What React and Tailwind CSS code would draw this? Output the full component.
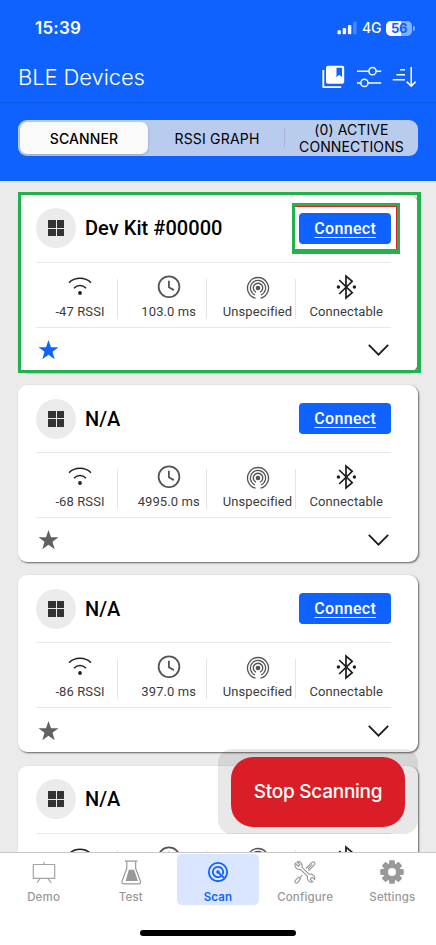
import React from "react";

const devices = [
  { name: "Dev Kit #00000", rssi: "-47 RSSI", interval: "103.0 ms", kind: "Unspecified", mode: "Connectable", action: "Connect", favorite: true },
  { name: "N/A", rssi: "-68 RSSI", interval: "4995.0 ms", kind: "Unspecified", mode: "Connectable", action: "Connect" },
  { name: "N/A", rssi: "-86 RSSI", interval: "397.0 ms", kind: "Unspecified", mode: "Connectable", action: "Connect" },
  { name: "N/A" },
];

function StatusBar() {
  return (
    <div className="flex h-[56px] items-center justify-between pl-[35px] pr-[21px] text-white">
      <span className="text-[17px] font-semibold leading-none tracking-[0.2px]">15:39</span>
      <div className="flex items-center">
        <svg width="20" height="14" viewBox="0 0 20 14" fill="white">
          <rect x="0.5" y="9.2" width="3.4" height="4" rx="0.9" />
          <rect x="5.7" y="7" width="3.4" height="6.2" rx="0.9" />
          <rect x="10.9" y="4" width="3.4" height="9.2" rx="0.9" />
          <rect x="16.1" y="0.8" width="3.4" height="12.4" rx="0.9" opacity="0.25" />
        </svg>
        <span className="ml-[5px] w-[21px] text-[14px] font-medium leading-none tracking-[-0.2px]">4G</span>
        <div className="ml-[3px] flex h-[15px] w-[26px] items-center justify-center rounded-[5px] bg-linear-to-r from-white from-56% to-[#87b1ff] to-56% text-[13px] font-bold leading-none tracking-[-0.3px] text-[#0f62fe]">
          56
        </div>
        <div className="ml-px h-[5px] w-[2px] rounded-r-full bg-[#87b1ff]" />
      </div>
    </div>
  );
}

function Header() {
  return (
    <div className="flex h-[47px] items-center justify-between border-b border-[#0c57e3] pb-[5px] pl-[18px] pr-[18px]">
      <h1 className="text-[22px] font-[350] leading-none tracking-[-0.1px] text-white">BLE Devices</h1>
      <div className="flex pt-[1px]">
        <svg width="100" height="26" viewBox="0 0 100 26" fill="none" stroke="white" strokeWidth="1.5">
          <path d="M5.3 6v17.1h17.9" strokeWidth="1.9" strokeLinejoin="round" />
          <path d="M10 1.8h14.2a2 2 0 0 1 2 2v14a2 2 0 0 1-2 2H10a2 2 0 0 1-2-2v-14a2 2 0 0 1 2-2Zm8.5 2v9.5l2.8-2.6 2.7 2.6V3.8Z" fill="white" fillRule="evenodd" stroke="none" />
          <path d="M39 7.2h11.7M58.3 7.2h4.9M39 18.9h3.6M50.2 18.9h13" />
          <circle cx="54.5" cy="7.2" r="3.6" />
          <circle cx="46.4" cy="18.9" r="3.6" />
          <path d="M82 5.8h5M78.5 10.8h8.5M74.7 15.8h12.3M93.2 3v18.7M88.7 17.6l4.5 4.5 4.5-4.5" />
        </svg>
      </div>
    </div>
  );
}

function SegmentedControl() {
  return (
    <div className="mx-[18px] mt-[17px] flex h-[36px] items-center rounded-[9px] bg-[#b9ccee] p-[2px] text-[14px] leading-[17px] text-black">
      <div className="flex h-[32px] w-[128px] items-center justify-center rounded-[7px] bg-[#fafafa] font-medium tracking-[0.1px] shadow-[0_1px_3px_rgba(0,0,0,0.2)]">SCANNER</div>
      <div className="flex h-[20px] w-[137px] items-center justify-center border-r border-[#a4b5d7] pl-[2px] tracking-[0.2px]">RSSI GRAPH</div>
      <div className="flex-1 pl-[2px] text-center tracking-[0.1px]">(0) ACTIVE<br />CONNECTIONS</div>
    </div>
  );
}

function WifiIcon() {
  return (
    <svg width="26" height="26" viewBox="0 0 26 26" fill="none" stroke="#222" strokeWidth="1.5">
      <path d="M2 8.7C8 2.9 18 2.9 24 8.7M7 14.2c3.5-3.5 8.5-3.5 12 0" />
      <circle cx="13" cy="19" r="1.9" fill="#222" stroke="none" />
    </svg>
  );
}

function ClockIcon() {
  return (
    <svg width="26" height="26" viewBox="0 0 26 26" fill="none" stroke="#555" strokeWidth="1.8">
      <circle cx="13" cy="12.7" r="10.4" />
      <path d="M12.9 6.8v6.4l5 2.9" />
    </svg>
  );
}

function BeaconIcon() {
  return (
    <svg width="26" height="26" viewBox="0 0 26 26" fill="none" stroke="#555" strokeWidth="1.3">
      <circle cx="13" cy="14" r="2.3" fill="#555" stroke="none" />
      <path d="M11 18.2a4.7 4.7 0 1 1 4 0M10 21a7.6 7.6 0 1 1 6 0M10.5 24.2a10.5 10.5 0 1 1 5 0" />
    </svg>
  );
}

function BluetoothIcon() {
  return (
    <svg width="26" height="26" viewBox="0 0 26 26" fill="none" stroke="#1c1c1c" strokeWidth="1.7">
      <path d="M6.2 6 19.2 18.6l-6.2 5.4V2l6.2 5.4L6.2 20" />
      <circle cx="5.4" cy="13" r="1.7" fill="#1c1c1c" stroke="none" />
      <circle cx="21.4" cy="13" r="1.7" fill="#1c1c1c" stroke="none" />
    </svg>
  );
}

function Stat({ icon, label, last }) {
  return (
    <div className="w-[89px]">
      <div className={`flex h-[40px] w-[82px] flex-col items-center border-r pl-[7px] ${last ? "border-transparent" : "border-[#e4e4e4]"}`}>
        <div className="-mt-[5px] h-[26px]">{icon}</div>
        {label && <span className="mt-[4px] whitespace-nowrap text-[13px] leading-[16px] tracking-[0.1px] text-[#3c3c3c]">{label}</span>}
      </div>
    </div>
  );
}

function DeviceCard({ device }) {
  return (
    <div className="relative h-[177px] shrink-0 rounded-[9px] bg-white px-[18px] pt-[13.5px] font-[Roboto,sans-serif] shadow-[1px_1px_2px_rgba(0,0,0,0.6)]">
      <div className="flex h-[40px] items-center">
        <div className="flex size-[40px] items-center justify-center rounded-full bg-[#ebebeb]">
          <div className="grid grid-cols-2 gap-px">
            <i className="size-[7.5px] bg-[#333]" />
            <i className="size-[7.5px] bg-[#333]" />
            <i className="size-[7.5px] bg-[#333]" />
            <i className="size-[7.5px] bg-[#333]" />
          </div>
        </div>
        <span className="ml-[9px] text-[20px] font-medium leading-none tracking-[0.05px] text-black">{device.name}</span>
        {device.action && (
          <button className="ml-auto mr-[9px] h-[31px] w-[91.6px] rounded-[4px] bg-[#0f62fe] pt-[1px] text-[16px] font-medium tracking-[0.3px] text-white underline decoration-1 underline-offset-3">
            {device.action}
          </button>
        )}
      </div>
      <div className="mr-[9px] mt-[13.5px] flex h-[66px] border-y border-[#e8e8e8] pt-[16px]">
        <Stat icon={<WifiIcon />} label={device.rssi} />
        <Stat icon={<ClockIcon />} label={device.interval} />
        <Stat icon={<BeaconIcon />} label={device.kind} />
        <Stat icon={<BluetoothIcon />} label={device.mode} last />
      </div>
      <div className="mr-[11.5px] flex h-[44.5px] items-center justify-between pl-[2px]">
        <svg width="21" height="20" viewBox="0 0 21 20" fill={device.favorite ? "#0f62fe" : "#616161"}>
          <path d="m10.5 0 2.5 7.2h7.5l-6 4.6 2.2 7.4-6.2-4.4-6.2 4.4 2.2-7.4-6-4.6H8Z" />
        </svg>
        <svg width="21" height="12" viewBox="0 0 21 12" fill="none" stroke="#1c1c1c" strokeWidth="1.8">
          <path d="m0.8 0.8 9.7 9.8 9.7-9.8" />
        </svg>
      </div>
      {device.favorite && (
        <>
          <div className="absolute -left-[0.5px] -top-[3px] h-[181px] w-[403px] border-3 border-r-4 border-[#22b14c]" />
          <div className="absolute left-[274px] top-[8.5px] h-[51px] w-[108px] border-3 border-b-5 border-[#22b14c]">
            <div className="h-full border-r border-t border-[#e0202c]" />
          </div>
        </>
      )}
    </div>
  );
}

function DemoIcon() {
  return (
    <svg width="28" height="28" viewBox="0 0 28 28" fill="none" stroke="#a3a3a3" strokeWidth="1.3">
      <path d="M2 5h24v15.5H2ZM14 2v3M9.5 20.8 6.2 25.5M18.5 20.8l3.7 4.7" />
    </svg>
  );
}

function FlaskIcon() {
  return (
    <svg width="28" height="28" viewBox="0 0 28 28" fill="none" stroke="#999" strokeWidth="1.3">
      <path d="M7.2 1.3h14M9.3 1.3v8L4 23.5q-1 3.2 2 3.2h16.5q3 0 2-3.2L19.2 9.3v-8" />
      <path d="M11.5 11h6l4.2 12.5H8Z" fill="#999" stroke="none" />
    </svg>
  );
}

function ScanIcon() {
  return (
    <svg width="28" height="28" viewBox="0 0 28 28" fill="none" stroke="#0f62fe" strokeWidth="2">
      <circle cx="14" cy="13.5" r="10.3" />
      <path d="M17.3 18.2a5.8 5.8 0 1 1 1.8-2M14 13.5l7.5 7" />
      <circle cx="14" cy="13.5" r="2" fill="#0f62fe" stroke="none" />
    </svg>
  );
}

function ToolsIcon() {
  return (
    <svg width="28" height="28" viewBox="0 0 28 28" fill="none" stroke="#999" strokeWidth="1.3" strokeLinejoin="round">
      <path d="M3 3.5 6.5 7 8.3 5.2 5 2.2C8.5 1 11.8 4 10.6 8l8 8c4-.8 7.2 2.2 6.4 6l-3-2.8-2.2 2.2 3 3c-3.7 1.2-7.2-2-6-6l-8-8C4.5 11.6 1.8 7.5 3 3.5Z" />
      <path d="m15 9.5 6.8-6.8q1.7-1.3 2.8 0t0 2.8l-6.8 6.5M17.3 10l5-5M11 17l-3.5 3.5M7 19.2l2 2-3.2 4.2q-1.3 1.3-2.6 0t0-2.6Z" />
    </svg>
  );
}

function GearIcon() {
  return (
    <svg width="28" height="28" viewBox="0 0 28 28">
      <g fill="#999">
        <rect x="10.7" y="0.3" width="6.6" height="26.4" rx="1.5" />
        <rect x="10.7" y="0.3" width="6.6" height="26.4" rx="1.5" transform="rotate(45 14 13.5)" />
        <rect x="10.7" y="0.3" width="6.6" height="26.4" rx="1.5" transform="rotate(90 14 13.5)" />
        <rect x="10.7" y="0.3" width="6.6" height="26.4" rx="1.5" transform="rotate(135 14 13.5)" />
        <circle cx="14" cy="13.5" r="10" />
      </g>
      <circle cx="14" cy="13.5" r="4.5" fill="white" />
    </svg>
  );
}

function Tab({ icon, label, active }) {
  return (
    <div className={`flex h-[51px] w-[82px] flex-col items-center rounded-[5px] pt-[6px] ${active ? "bg-[#dae6ff] font-semibold text-[#0f62fe]" : "font-medium text-[#999]"}`}>
      {icon}
      <span className="mt-[5px] text-[11.5px] leading-[15px] tracking-[0.15px]">{label}</span>
    </div>
  );
}

export default function App() {
  return (
    <div className="relative flex h-[945px] w-[436px] flex-col overflow-hidden bg-[#ebebeb] font-[Inter,sans-serif]">
      <header className="h-[181px] shrink-0 bg-[#0f62fe]">
        <StatusBar />
        <Header />
        <SegmentedControl />
      </header>
      <main className="flex min-h-0 flex-1 flex-col gap-[13.3px] overflow-hidden px-[18px] pt-[13.9px]">
        {devices.map((device, i) => (
          <DeviceCard key={i} device={device} />
        ))}
      </main>
      <div className="absolute left-[218px] top-[749px] flex h-[84.5px] w-[200px] justify-center rounded-[14px] bg-black/9 pt-[7.5px]">
        <button className="h-[70px] w-[174px] rounded-[22px] bg-[#da1e28] pt-[1px] text-[19px] font-medium tracking-[-0.25px] text-white">Stop Scanning</button>
      </div>
      <nav className="flex h-[93.5px] shrink-0 flex-col border-t border-[#c8c8c8] bg-white">
        <div className="flex justify-around pt-[1.5px]">
          <Tab icon={<DemoIcon />} label="Demo" />
          <Tab icon={<FlaskIcon />} label="Test" />
          <Tab icon={<ScanIcon />} label="Scan" active />
          <Tab icon={<ToolsIcon />} label="Configure" />
          <Tab icon={<GearIcon />} label="Settings" />
        </div>
        <div className="mx-auto mt-[25px] h-[5.5px] w-[156px] rounded-full bg-black" />
      </nav>
    </div>
  );
}
